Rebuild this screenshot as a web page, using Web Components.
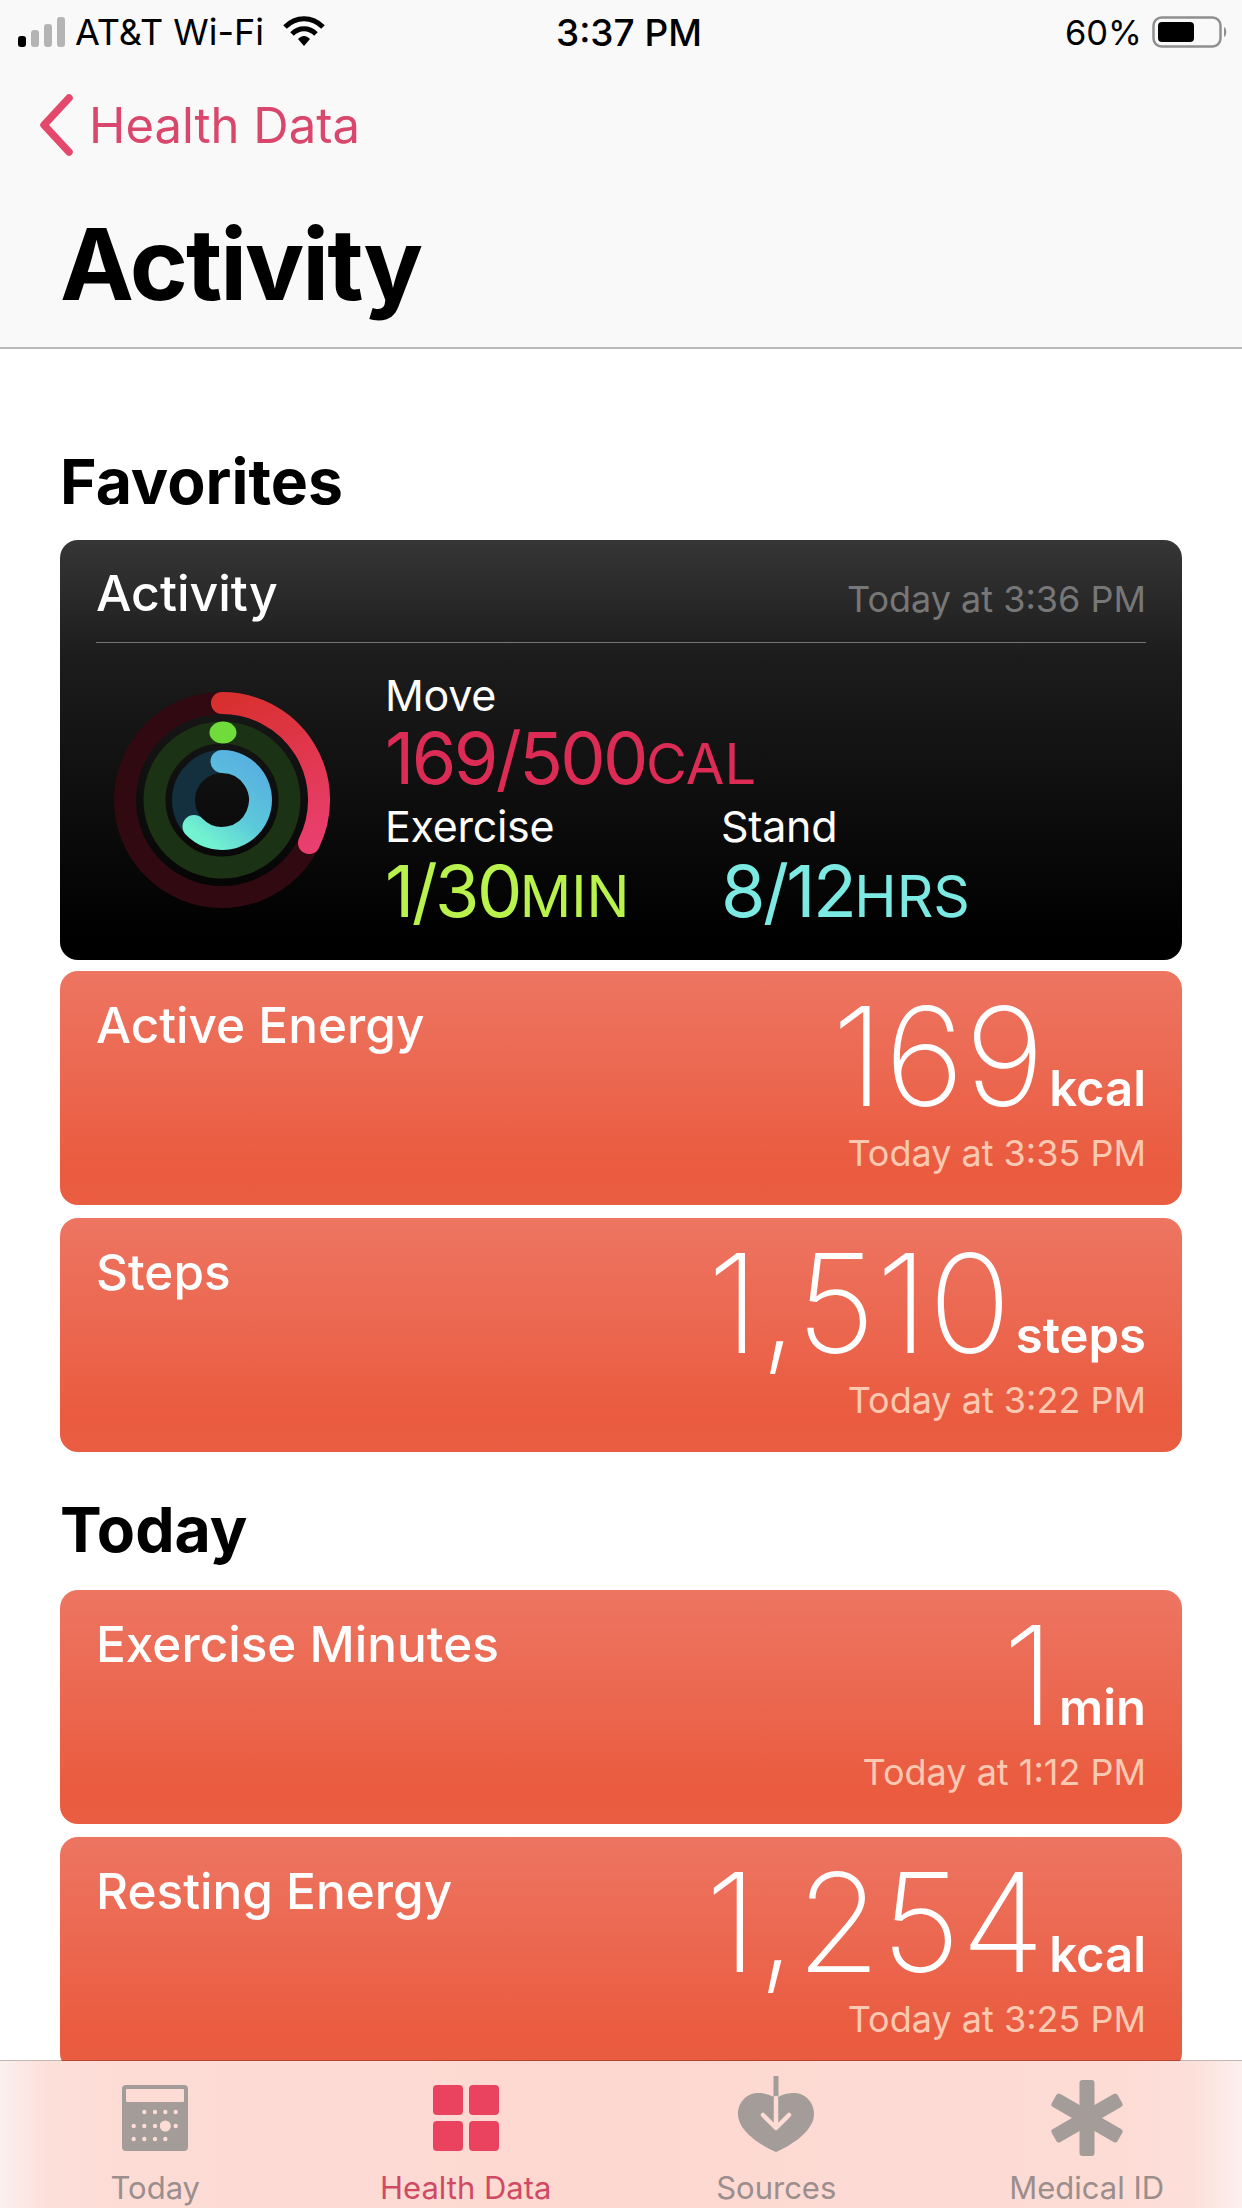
<!DOCTYPE html>
<html>
<head>
<meta charset="utf-8">
<title>Activity</title>
<style>
  html, body { margin: 0; padding: 0; }
  body {
    width: 1242px;
    height: 2208px;
    overflow: hidden;
    position: relative;
    background: #fff;
    font-family: Inter, "Noto Sans", sans-serif;
    color: #000;
  }
  main { display: block; padding: 94px 60px 0; }
</style>
</head>
<body>
  <status-bar></status-bar>
  <nav-header back="Health Data" title="Activity"></nav-header>
  <main>
    <section-title>Favorites</section-title>
    <activity-card></activity-card>
    <metric-card label="Active Energy" value="169" unit="kcal" time="Today at 3:35 PM"></metric-card>
    <metric-card label="Steps" value="1,510" unit="steps" time="Today at 3:22 PM"></metric-card>
    <section-title class="later">Today</section-title>
    <metric-card label="Exercise Minutes" value="1" unit="min" time="Today at 1:12 PM"></metric-card>
    <metric-card label="Resting Energy" value="1,254" unit="kcal" time="Today at 3:25 PM"></metric-card>
  </main>
  <tab-bar></tab-bar>

<script>
class StatusBar extends HTMLElement {
  constructor() {
    super();
    const shadow = this.attachShadow({mode: 'open'});
    shadow.innerHTML = `
    <style>
      :host { display: block; background: #f9f9f9; height: 62px; }
      .bar { display: grid; grid-template-columns: 1fr auto 1fr; align-items: center; height: 62px; padding: 2px 14px 0 18px; box-sizing: border-box; font-size: 36px; }
      .left, .right { display: flex; align-items: center; }
      .right { justify-content: flex-end; }
      .carrier { margin-left: 9px; }
      .wifi { margin-left: 19px; }
      .time { font-weight: 500; font-size: 37px; margin-left: 12px; }
      .pct { margin-right: 10px; font-size: 34.5px; }
    </style>
    <div class="bar">
      <div class="left">
        <svg width="48" height="32" viewBox="0 0 48 32">
          <rect x="0" y="20" width="8" height="11" rx="3" fill="#000"/>
          <rect x="13" y="14" width="8" height="17" rx="3" fill="#b4b4b4"/>
          <rect x="26" y="8" width="8" height="23" rx="3" fill="#b4b4b4"/>
          <rect x="39" y="1" width="8" height="30" rx="3" fill="#b4b4b4"/>
        </svg>
        <span class="carrier">AT&amp;T Wi-Fi</span>
        <svg class="wifi" width="42" height="32" viewBox="0 0 42 32">
          <path d="M2 11 C13 0 29 0 40 11" fill="none" stroke="#000" stroke-width="5"/>
          <path d="M9 18 C16 11 26 11 33 18" fill="none" stroke="#000" stroke-width="5"/>
          <path d="M15 23 C19 19 23 19 27 23 L21 30 Z" fill="#000"/>
        </svg>
      </div>
      <div class="time">3:37 PM</div>
      <div class="right">
        <span class="pct">60%</span>
        <svg width="76" height="32" viewBox="0 0 76 32">
          <rect x="1.5" y="1.5" width="67" height="29" rx="8" fill="none" stroke="#8f8f8f" stroke-width="2.5"/>
          <rect x="6" y="6" width="36" height="20" rx="4" fill="#000"/>
          <path d="M72 11 C75 12 75 20 72 21 Z" fill="#8f8f8f"/>
        </svg>
      </div>
    </div>`;
  }
}

class NavHeader extends HTMLElement {
  constructor() {
    super();
    const shadow = this.attachShadow({mode: 'open'});
    shadow.innerHTML = `
    <style>
      :host { display: block; background: #f9f9f9; border-bottom: 2px solid #b9b9b9; height: 287px; box-sizing: border-box; padding-top: 30px; }
      .back { display: flex; align-items: center; height: 66px; padding-left: 38px; color: #d9486c; font-size: 49px; }
      .back svg { margin-right: 15px; flex: none; }
      h1 { margin: 50px 0 0 60px; font-size: 99px; line-height: 112px; font-weight: 700; letter-spacing: -2px; }
    </style>
    <div class="back">
      <svg width="36" height="62" viewBox="0 0 36 62">
        <path d="M31 4 L6 31 L31 58" fill="none" stroke="#e4486a" stroke-width="7.5" stroke-linecap="round" stroke-linejoin="round"/>
      </svg>
      <span id="back"></span>
    </div>
    <h1 id="title"></h1>`;
    shadow.getElementById('back').textContent = this.getAttribute('back');
    shadow.getElementById('title').textContent = this.getAttribute('title');
  }
}

class SectionTitle extends HTMLElement {
  constructor() {
    super();
    const shadow = this.attachShadow({mode: 'open'});
    shadow.innerHTML = `
    <style>
      :host { display: block; font-size: 62.5px; line-height: 76px; font-weight: 700; padding-bottom: 21px; }
      :host(.later) { padding-top: 26px; padding-bottom: 23px; }
    </style>
    <slot></slot>`;
  }
}

class ActivityRings extends HTMLElement {
  constructor() {
    super();
    const shadow = this.attachShadow({mode: 'open'});
    shadow.innerHTML = `
    <style>
      :host { display: block; width: 224px; height: 224px; }
      svg { display: block; }
    </style>
    <svg width="224" height="224" viewBox="-112 -112 224 224" fill="none">
      <defs>
        <linearGradient id="red" gradientUnits="userSpaceOnUse" x1="0" y1="-100" x2="70" y2="60">
          <stop offset="0" stop-color="#d8302f"/>
          <stop offset="1" stop-color="#ea3f71"/>
        </linearGradient>
        <linearGradient id="blue" gradientUnits="userSpaceOnUse" x1="20" y1="-40" x2="-30" y2="30">
          <stop offset="0" stop-color="#59b1e0"/>
          <stop offset="0.55" stop-color="#5cc9da"/>
          <stop offset="1" stop-color="#72f2d0"/>
        </linearGradient>
      </defs>
      <circle r="97" stroke="#300a10" stroke-width="22"/>
      <circle r="67.5" stroke="#1c3214" stroke-width="22"/>
      <circle r="38.5" stroke="#14303e" stroke-width="23"/>
      <path d="M0 -97 A97 97 0 0 1 87 43" stroke="url(#red)" stroke-width="22" stroke-linecap="round"/>
      <ellipse cx="1" cy="-67.5" rx="13.5" ry="11" fill="#6fdc3c"/>
      <path d="M0 -38.5 A38.5 38.5 0 1 1 -28 26.5" stroke="url(#blue)" stroke-width="23" stroke-linecap="round"/>
    </svg>`;
  }
}

class ActivityCard extends HTMLElement {
  constructor() {
    super();
    const shadow = this.attachShadow({mode: 'open'});
    shadow.innerHTML = `
    <style>
      :host { display: block; height: 420px; margin-bottom: 11px; padding: 0 36px; box-sizing: border-box; border-radius: 18px; color: #fff; background: linear-gradient(#363636, #1c1c1c 28%, #000 95%); }
      .head { display: flex; justify-content: space-between; align-items: center; height: 102px; border-bottom: 1px solid #767676; }
      .head .name { font-size: 50px; font-weight: 500; margin-top: 4px; }
      .head .time { font-size: 36px; color: #777; margin-top: 16px; }
      .body { display: grid; grid-template-columns: 289px 336px auto; grid-template-rows: auto auto auto auto; }
      activity-rings { grid-row: 1 / 5; margin: 45px 0 0 14px; }
      .lbl { font-size: 43px; line-height: 50px; letter-spacing: -0.3px; }
      .val { font-size: 72px; line-height: 76px; letter-spacing: -2.6px; }
      .val small { font-size: 56px; letter-spacing: 0; }
      .v2 small { font-size: 57px; }
      .move { grid-column: 2 / 4; }
      .l1 { padding-top: 27px; }
      .l2 { margin-top: -1px; }
      .v2 { line-height: 84px; margin-top: -2px; }
      .red { color: #dc2c55; }
      .green { color: #b9f24c; }
      .cyan { color: #7de9e3; }
    </style>
    <div class="head"><span class="name">Activity</span><span class="time">Today at 3:36 PM</span></div>
    <div class="body">
      <activity-rings></activity-rings>
      <div class="lbl move l1">Move</div>
      <div class="val move red">169/500<small>CAL</small></div>
      <div class="lbl l2">Exercise</div>
      <div class="lbl l2">Stand</div>
      <div class="val v2 green">1/30<small>MIN</small></div>
      <div class="val v2 cyan">8/12<small>HRS</small></div>
    </div>`;
  }
}

class MetricCard extends HTMLElement {
  constructor() {
    super();
    const shadow = this.attachShadow({mode: 'open'});
    shadow.innerHTML = `
    <style>
      :host { display: flex; justify-content: space-between; height: 234px; margin-bottom: 13px; padding: 0 36px; box-sizing: border-box; border-radius: 18px; color: #fff; background: linear-gradient(#ed7562, #ea5b3f 85%, #e95d42); }
      .label { font-size: 49.5px; font-weight: 500; line-height: 60px; padding-top: 24px; }
      .right { display: flex; flex-direction: column; align-items: flex-end; }
      .value { display: flex; align-items: baseline; height: 160px; box-sizing: border-box; padding-top: 17px; line-height: 136px; }
      .num { font-size: 137px; font-weight: 250; letter-spacing: 0.5px; }
      .unit { font-size: 49px; font-weight: 600; margin-left: 4px; }
      .time { font-size: 36px; line-height: 44px; color: #fbc9b2; }
    </style>
    <div class="label" id="label"></div>
    <div class="right">
      <div class="value"><span class="num" id="value"></span><span class="unit" id="unit"></span></div>
      <div class="time" id="time"></div>
    </div>`;
    for (const k of ['label', 'value', 'unit', 'time']) {
      shadow.getElementById(k).textContent = this.getAttribute(k);
    }
  }
}

class TabItem extends HTMLElement {
  constructor() {
    super();
    const shadow = this.attachShadow({mode: 'open'});
    shadow.innerHTML = `
    <style>
      :host { display: flex; flex: 1; flex-direction: column; align-items: center; color: #9b8e8c; font-size: 31px; }
      :host([active]) { color: #cf4a63; }
      .icon { height: 84px; }
      .text { line-height: 36px; margin-top: 10px; }
    </style>
    <div class="icon"><slot name="icon"></slot></div>
    <div class="text"><slot></slot></div>`;
  }
}

class TabBar extends HTMLElement {
  constructor() {
    super();
    const shadow = this.attachShadow({mode: 'open'});
    const band = '#fddcd6';
    let dots = '';
    const rows = [[36, [31.3, 42, 52.3, 62.7]], [50, [20.7, 31.3, 42, 62.7]], [63, [20.7, 31.3, 42, 52.3]]];
    rows.forEach(r => r[1].forEach(x => { dots += `<circle cx="${x}" cy="${r[0]}" r="2.2"/>`; }));
    shadow.innerHTML = `
    <style>
      :host { position: absolute; left: 0; right: 0; bottom: 0; height: 148px; box-sizing: border-box; padding-top: 15px; display: flex; border-top: 1px solid rgba(60, 20, 10, .3); background-clip: padding-box; background-image: linear-gradient(to right, #fbf0ee 0, #fde0da 45px, #fddcd6 110px, #fdd8d1 620px, #fddcd6 1130px, #fde0da 1195px, #fbf0ee 100%); }
      svg { display: block; }
    </style>
    <tab-item>
      <svg slot="icon" width="84" height="84" viewBox="0 0 84 84">
        <rect x="9" y="9" width="66" height="66" rx="4" fill="#a39c98"/>
        <rect x="13" y="13" width="58" height="13" rx="1" fill="${band}"/>
        <g fill="${band}">${dots}<circle cx="52.3" cy="50" r="5.5"/></g>
      </svg>
      Today
    </tab-item>
    <tab-item active>
      <svg slot="icon" width="84" height="84" viewBox="0 0 84 84" fill="#e9435f">
        <rect x="9" y="9" width="30" height="30" rx="4"/>
        <rect x="45" y="9" width="30" height="30" rx="4"/>
        <rect x="9" y="45" width="30" height="30" rx="4"/>
        <rect x="45" y="45" width="30" height="30" rx="4"/>
      </svg>
      Health Data
    </tab-item>
    <tab-item>
      <svg slot="icon" width="84" height="84" viewBox="0 0 84 84">
        <path d="M42 23 C38 19 31 17 24 17 C12 17 4 27 4 38 C4 54 24 68 42 76 C60 68 80 54 80 38 C80 27 72 17 60 17 C53 17 46 19 42 23 Z" fill="#a39c98"/>
        <path d="M42 1 L42 22" stroke="#a39c98" stroke-width="5" stroke-linecap="round"/>
        <path d="M42 22 L42 51 M29 39 L42 52 L55 39" fill="none" stroke="${band}" stroke-width="4.5" stroke-linecap="round" stroke-linejoin="round"/>
      </svg>
      Sources
    </tab-item>
    <tab-item>
      <svg slot="icon" width="84" height="84" viewBox="0 0 84 84" fill="#a39c98">
        <rect x="34.5" y="4" width="15" height="76" rx="3"/>
        <rect x="34.5" y="4" width="15" height="76" rx="3" transform="rotate(60 42 42)"/>
        <rect x="34.5" y="4" width="15" height="76" rx="3" transform="rotate(-60 42 42)"/>
      </svg>
      Medical ID
    </tab-item>`;
  }
}

customElements.define('status-bar', StatusBar);
customElements.define('nav-header', NavHeader);
customElements.define('section-title', SectionTitle);
customElements.define('activity-rings', ActivityRings);
customElements.define('activity-card', ActivityCard);
customElements.define('metric-card', MetricCard);
customElements.define('tab-item', TabItem);
customElements.define('tab-bar', TabBar);
</script>
</body>
</html>
